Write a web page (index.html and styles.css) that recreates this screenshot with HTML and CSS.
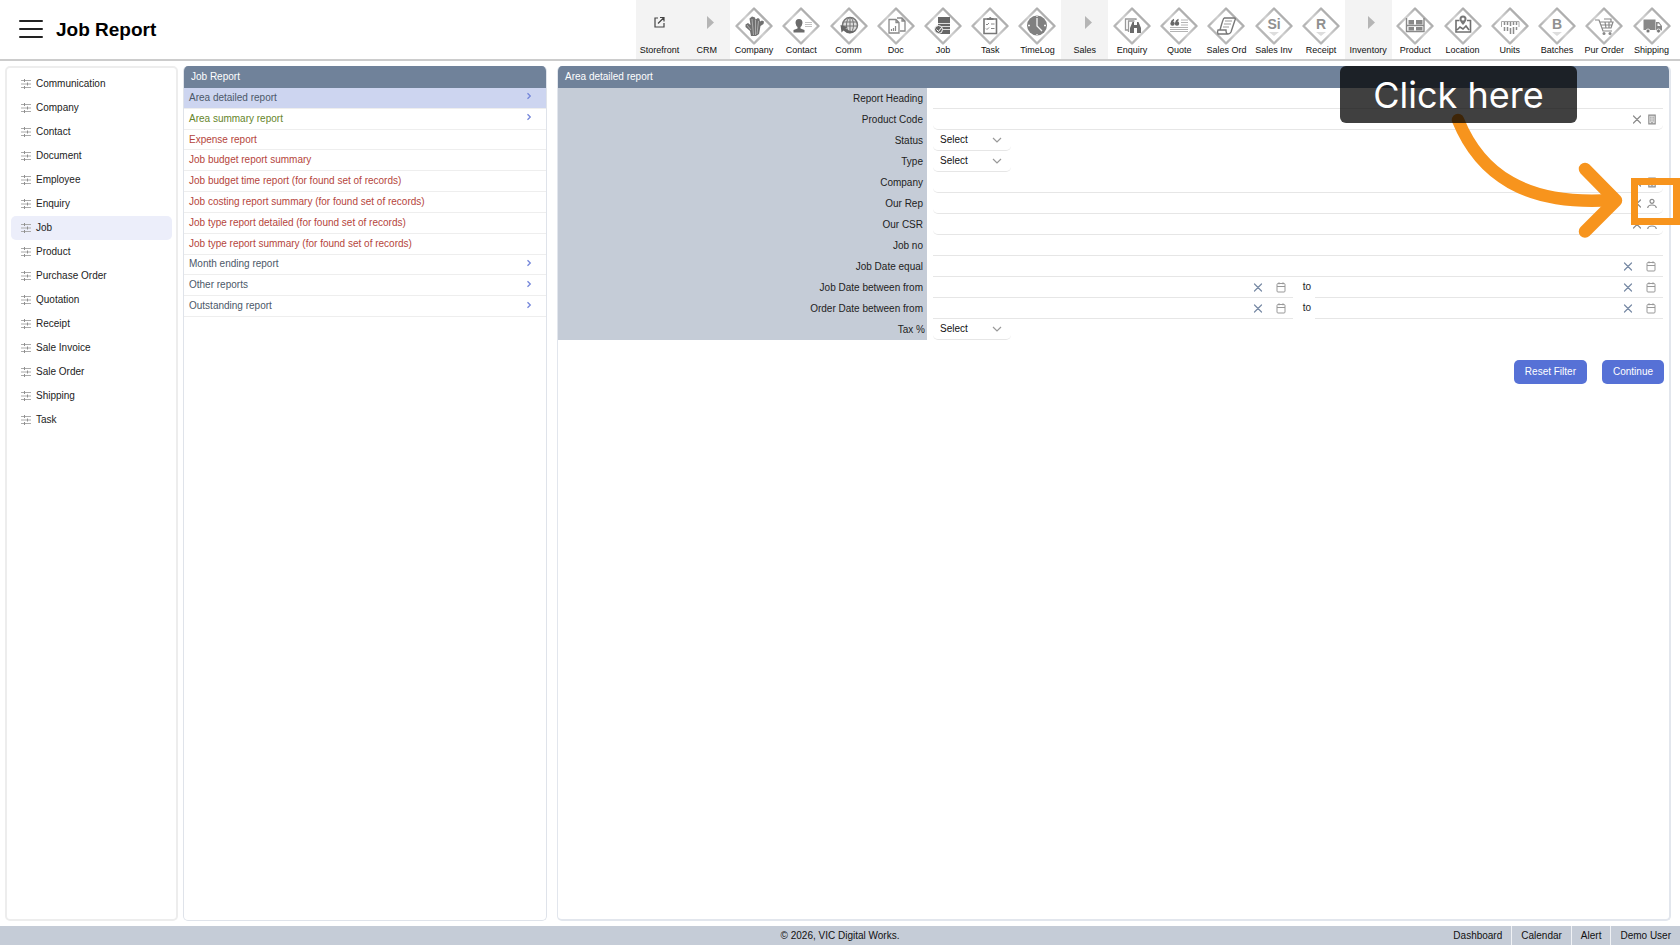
FILE: index.html
```
<!DOCTYPE html>
<html lang="en">
<head>
<meta charset="utf-8">
<title>Job Report</title>
<link rel="stylesheet" href="styles.css">
</head>
<body>
<svg class="defs" width="0" height="0" aria-hidden="true">
  <defs>
    <linearGradient id="edge" x1="0" y1="1" x2="1" y2="0"><stop offset="0" stop-color="#c4c4c4"/><stop offset=".3" stop-color="#b4b4b4"/><stop offset=".5" stop-color="#d0d0d0"/><stop offset="1" stop-color="#8e8e8e"/></linearGradient>
    <symbol id="diamond" viewBox="0 0 38 38"><path d="M19 1.500 36.500 19 19 36.500 1.500 19Z" fill="#fff" stroke="url(#edge)" stroke-width="2.400" stroke-linejoin="round"/></symbol>
    <symbol id="sliders" viewBox="0 0 10 10"><path d="M0 1.500h10M0 5h10M0 8.500h10" stroke="#aaa" fill="none"/><path d="M3.500 0v3M6.500 3.500v3M3.500 7v3" stroke="#909090" fill="none"/></symbol>
    <symbol id="cross" viewBox="0 0 10 10"><path d="M1.500 1.500l7 7M8.500 1.500l-7 7" stroke="currentColor" stroke-width="1.200" fill="none" stroke-linecap="round"/></symbol>
    <symbol id="calendar" viewBox="0 0 10 11"><path d="M1 2.500q0-1 1-1h6q1 0 1 1v6.500q0 1-1 1H2q-1 0-1-1zM1 4.500h8M3 .3v2M7 .3v2" stroke="#999" fill="none"/></symbol>
    <symbol id="building" viewBox="0 0 10 12"><path d="M1.500 1.200h7v9.600h-7z" stroke="currentColor" stroke-width="1.200" fill="#e4e4e4"/><path d="M3 3.500h1.500M5.500 3.500H7M3 5.500h1.500M5.500 5.500H7M3 7.500h1.500M5.500 7.500H7M4 9.500h2" stroke="currentColor"/></symbol>
    <symbol id="person" viewBox="0 0 10 10"><circle cx="5" cy="2.800" r="2" stroke="currentColor" stroke-width="1.200" fill="none"/><path d="M.7 9.500C1 5.500 9 5.500 9.300 9.500" stroke="currentColor" stroke-width="1.200" fill="none"/></symbol>
    <symbol id="next" viewBox="0 0 6 8"><path d="M1.500 1.200 4.300 4 1.500 6.800" stroke="#7486da" stroke-width="1.300" fill="none"/></symbol>
    <symbol id="fold" viewBox="0 0 38 38"><path d="M19 9v13l7-6.500z" fill="#b5b5b5"/></symbol>
  </defs>
</svg>

<header class="topbar">
  <button class="menu" type="button" aria-label="Menu"><span></span><span></span><span></span></button>
  <h1>Job Report</h1>
  <nav class="tools">
    <a class="tool group" href="#"><svg viewBox="0 0 38 38"><path d="M17 11h-3v9h9v-4M19 10.500h4v4M23 10.500l-6 6" stroke="#444" stroke-width="1.200" fill="none"/></svg>Storefront</a>
    <a class="tool group" href="#"><svg><use href="#fold"/></svg>CRM</a>
    <a class="tool" href="#"><svg viewBox="0 0 38 38"><use href="#diamond"/><path d="M16 29 15 24 10.500 20v-2.500L13 16l2.500 2L14.500 11.500l2.500-2 3 1 .5 2 2.500-1.500 1.500 1 .5 2.500 2-1 2 1-.5 2.500-3 2L24 27l-3 2z" fill="#707070"/><path d="M17 12l1.500 16M20.500 13v15M23.500 14l-1.500 13M12 18l4 5" stroke="#c4c4c4" stroke-width=".7"/></svg>Company</a>
    <a class="tool" href="#"><svg viewBox="0 0 38 38"><use href="#diamond"/><path d="M17 12q3.500 0 3.500 4-.5 3-2 4v1.500l4 1.500v2.500h-11V23l4-1.500V20q-1.500-1-2-4 0-4 3.500-4z" fill="#6b6b6b"/><path d="M23 15.500h7M23 17.500h7M23 19.500h7" stroke="#bbb" stroke-width=".9"/></svg>Contact</a>
    <a class="tool" href="#"><svg viewBox="0 0 38 38"><use href="#diamond"/><circle cx="20" cy="18" r="7.500" stroke="#777" stroke-width="1.500" fill="#ddd"/><ellipse cx="20" cy="18" rx="3.500" ry="7.500" stroke="#777" fill="none"/><path d="M13 15h14M12 19h16M20 10v15" stroke="#777"/><path d="M10.500 18l7 2-2 1.500q5 4 11 2-7 6-13 0l-2 2z" fill="#666"/></svg>Comm</a>
    <a class="tool" href="#"><svg viewBox="0 0 38 38"><use href="#diamond"/><path d="M12 12.500h7l3 3v10.500H12zM20 11h5l3 3v10h-5M19 12.500v3h3M25 11v3h3" stroke="#888" stroke-width="1.300" fill="none"/><path d="M14.500 24v-2M16.500 24v-3M18.500 24v-5" stroke="#888" stroke-width="1.200"/></svg>Doc</a>
    <a class="tool" href="#"><svg viewBox="0 0 38 38"><use href="#diamond"/><path d="M14 10h12v17H14z" fill="#666"/><path d="M14 16.500h12M18 19.500h8M19 22.500h7" stroke="#ddd"/><circle cx="14.500" cy="22.500" r="4" fill="#666" stroke="#fff"/><path d="M12.500 22.500l2 2 3-4" stroke="#fff" fill="none"/></svg>Job</a>
    <a class="tool" href="#"><svg viewBox="0 0 38 38"><use href="#diamond"/><path d="M13 12h12.500v14.500H13z" stroke="#777" stroke-width="1.600" fill="#fff"/><path d="M16 13v-2h2q1-2 2.500 0h2v2z" fill="#777"/><path d="M15 17l1 1 2-2M20 17h3.500M15 21.500l1 1 2-2M20 21.500h3.500" stroke="#888" fill="none"/></svg>Task</a>
    <a class="tool" href="#"><svg viewBox="0 0 38 38"><use href="#diamond"/><circle cx="19" cy="18.500" r="10" fill="#808080"/><path d="M19 11v8l5 5M10 18.500h2M26 18.500h2M19 9v1M19 27v1" stroke="#f5f5f5" stroke-width="1.300" fill="none"/></svg>TimeLog</a>
    <a class="tool group" href="#"><svg><use href="#fold"/></svg>Sales</a>
    <a class="tool" href="#"><svg viewBox="0 0 38 38"><use href="#diamond"/><path d="M15 23h-2.500V12H23v1M15.500 25V14h6" stroke="#999" stroke-width="1.300" fill="none"/><path d="M17 26v-5l2.500-6H21v3h3v-3h1.500l2.500 6v5h-4v-5h-3v5z" fill="#6b6b6b"/></svg>Enquiry</a>
    <a class="tool" href="#"><svg viewBox="0 0 38 38"><use href="#diamond"/><path d="M14 12.500q-2.500 1-3 4a1.500 1.500 0 1 0 1.500-1.500M18.500 12.500q-2.500 1-3 4a1.500 1.500 0 1 0 1.500-1.500" stroke="#666" stroke-width="1.400" fill="#666"/><path d="M21 13h7M21 15.500h7M21 18h7M10 20.500h18M10 22.500h18M10 24.500h18" stroke="#b4b4b4"/></svg>Quote</a>
    <a class="tool" href="#"><svg viewBox="0 0 38 38"><use href="#diamond"/><path d="M17 11h10q2 0 1 2l-4 12q-1 2-3 2H11q-1-2 0-4h8q0 4 2 4M17 11q-1 1-4 12" stroke="#777" stroke-width="1.400" fill="none"/><path d="M18 14h7M17 17h7M16 20h6" stroke="#999" stroke-width="1.200"/></svg>Sales Ord</a>
    <a class="tool" href="#"><svg viewBox="0 0 38 38"><use href="#diamond"/><text x="19" y="22" class="glyph">Si</text><path d="M14 25h10l-5 4z" fill="#ddd"/></svg>Sales Inv</a>
    <a class="tool" href="#"><svg viewBox="0 0 38 38"><use href="#diamond"/><text x="19" y="22" class="glyph">R</text><path d="M14 25h10l-5 4z" fill="#ddd"/></svg>Receipt</a>
    <a class="tool group" href="#"><svg><use href="#fold"/></svg>Inventory</a>
    <a class="tool" href="#"><svg viewBox="0 0 38 38"><use href="#diamond"/><path d="M10.500 11v14M28 11v14M10 18.500h18M10 24.500h18" stroke="#888" stroke-width="1.400"/><path d="M12.500 13h5.500v4.500h-5.500zM20 13h6.500v4.500H20zM12.500 20h5.500v3.500h-5.500zM20 20h6.500v3.500H20z" fill="#888"/></svg>Product</a>
    <a class="tool" href="#"><svg viewBox="0 0 38 38"><use href="#diamond"/><path d="M15.500 13.500H12V25h14.500V13.500H23M13 23l3-3 3 2 3-3 3 4" stroke="#707070" stroke-width="1.600" fill="none"/><path d="M19 18q-3.500-4-3.500-6a3.500 3.500 0 0 1 7 0q0 2-3.500 6z" fill="#777"/><circle cx="19" cy="12" r="1.500" fill="#fff"/></svg>Location</a>
    <a class="tool" href="#"><svg viewBox="0 0 38 38"><use href="#diamond"/><path d="M10.500 20v-5.500H28V20" stroke="#aaa" fill="none"/><path d="M13.500 15v3M16.500 15v3M19.500 15v4M22.500 15v3M25.500 15v3M13.500 20v4M16.500 20v4M19.500 21v6M22.500 20v7M25.500 20v3" stroke="#8c8c8c" stroke-width="1.500"/></svg>Units</a>
    <a class="tool" href="#"><svg viewBox="0 0 38 38"><use href="#diamond"/><text x="19" y="22" class="glyph">B</text><path d="M14 25h10l-5 4z" fill="#ddd"/></svg>Batches</a>
    <a class="tool" href="#"><svg viewBox="0 0 38 38"><use href="#diamond"/><path d="M10 13h4l4 11h9M15 15h13l-2 6h-9M16 18h11M20 15l1 6M24 15v6M19 12h7v3" stroke="#888" stroke-width="1.200" fill="none"/><circle cx="19" cy="26.500" r="1.500" fill="#888"/><circle cx="25" cy="26.500" r="1.500" fill="#888"/></svg>Pur Order</a>
    <a class="tool" href="#"><svg viewBox="0 0 38 38"><use href="#diamond"/><path d="M10.500 12.500h12V23h-12zM23 15h3l3 4v4.500h-6z" fill="#888"/><path d="M24.500 16.500H26l1.500 2.500h-3z" fill="#fff"/><circle cx="15" cy="24" r="2" fill="#777" stroke="#fff" stroke-width=".8"/><circle cx="25.500" cy="24" r="2" fill="#777" stroke="#fff" stroke-width=".8"/></svg>Shipping</a>
  </nav>
</header>

<main class="workspace">
  <nav class="panel modules">
    <a href="#"><svg><use href="#sliders"/></svg>Communication</a>
    <a href="#"><svg><use href="#sliders"/></svg>Company</a>
    <a href="#"><svg><use href="#sliders"/></svg>Contact</a>
    <a href="#"><svg><use href="#sliders"/></svg>Document</a>
    <a href="#"><svg><use href="#sliders"/></svg>Employee</a>
    <a href="#"><svg><use href="#sliders"/></svg>Enquiry</a>
    <a href="#" class="active"><svg><use href="#sliders"/></svg>Job</a>
    <a href="#"><svg><use href="#sliders"/></svg>Product</a>
    <a href="#"><svg><use href="#sliders"/></svg>Purchase Order</a>
    <a href="#"><svg><use href="#sliders"/></svg>Quotation</a>
    <a href="#"><svg><use href="#sliders"/></svg>Receipt</a>
    <a href="#"><svg><use href="#sliders"/></svg>Sale Invoice</a>
    <a href="#"><svg><use href="#sliders"/></svg>Sale Order</a>
    <a href="#"><svg><use href="#sliders"/></svg>Shipping</a>
    <a href="#"><svg><use href="#sliders"/></svg>Task</a>
  </nav>

  <section class="panel reports">
    <h2>Job Report</h2>
    <nav class="report-list">
      <a href="#" class="active">Area detailed report<svg><use href="#next"/></svg></a>
      <a href="#" class="green">Area summary report<svg><use href="#next"/></svg></a>
      <a href="#" class="red">Expense report</a>
      <a href="#" class="red">Job budget report summary</a>
      <a href="#" class="red">Job budget time report (for found set of records)</a>
      <a href="#" class="red">Job costing report summary (for found set of records)</a>
      <a href="#" class="red">Job type report detailed (for found set of records)</a>
      <a href="#" class="red">Job type report summary (for found set of records)</a>
      <a href="#">Month ending report<svg><use href="#next"/></svg></a>
      <a href="#">Other reports<svg><use href="#next"/></svg></a>
      <a href="#">Outstanding report<svg><use href="#next"/></svg></a>
    </nav>
  </section>

  <section class="panel detail">
    <h2>Area detailed report</h2>
    <form>
      <div class="row"><label for="heading">Report Heading</label><div class="cell"><span class="field"><input id="heading" type="text"></span></div></div>
      <div class="row"><label for="code">Product Code</label><div class="cell"><span class="field lookup"><input id="code" type="text"><button type="button" aria-label="Clear product code"><svg><use href="#cross"/></svg></button><button type="button" aria-label="Find product"><svg><use href="#building"/></svg></button></span></div></div>
      <div class="row"><label for="status">Status</label><div class="cell"><span class="pick"><select id="status"><option>Select</option></select><svg viewBox="0 0 10 6"><path d="M1 1l4 4 4-4" stroke="#999" stroke-width="1.200" fill="none"/></svg></span></div></div>
      <div class="row"><label for="type">Type</label><div class="cell"><span class="pick"><select id="type"><option>Select</option></select><svg viewBox="0 0 10 6"><path d="M1 1l4 4 4-4" stroke="#999" stroke-width="1.200" fill="none"/></svg></span></div></div>
      <div class="row"><label for="company">Company</label><div class="cell"><span class="field lookup"><input id="company" type="text"><button type="button" aria-label="Clear company"><svg><use href="#cross"/></svg></button><button type="button" aria-label="Find company"><svg><use href="#building"/></svg></button></span></div></div>
      <div class="row"><label for="rep">Our Rep</label><div class="cell"><span class="field lookup"><input id="rep" type="text"><button type="button" aria-label="Clear rep"><svg><use href="#cross"/></svg></button><button type="button" aria-label="Find rep"><svg><use href="#person"/></svg></button></span></div></div>
      <div class="row"><label for="csr">Our CSR</label><div class="cell"><span class="field lookup"><input id="csr" type="text"><button type="button" aria-label="Clear CSR"><svg><use href="#cross"/></svg></button><button type="button" aria-label="Find CSR"><svg><use href="#person"/></svg></button></span></div></div>
      <div class="row"><label for="jobno">Job no</label><div class="cell"><span class="field"><input id="jobno" type="text"></span></div></div>
      <div class="row"><label for="jobdate">Job Date equal</label><div class="cell"><span class="field date"><input id="jobdate" type="text"><button type="button" aria-label="Clear date"><svg><use href="#cross"/></svg></button><button type="button" aria-label="Pick date"><svg><use href="#calendar"/></svg></button></span></div></div>
      <div class="row"><label for="jobfrom">Job Date between from</label><div class="cell"><span class="field date"><input id="jobfrom" type="text"><button type="button" aria-label="Clear date"><svg><use href="#cross"/></svg></button><button type="button" aria-label="Pick date"><svg><use href="#calendar"/></svg></button></span><label class="to" for="jobto">to</label><span class="field date"><input id="jobto" type="text"><button type="button" aria-label="Clear date"><svg><use href="#cross"/></svg></button><button type="button" aria-label="Pick date"><svg><use href="#calendar"/></svg></button></span></div></div>
      <div class="row"><label for="orderfrom">Order Date between from</label><div class="cell"><span class="field date"><input id="orderfrom" type="text"><button type="button" aria-label="Clear date"><svg><use href="#cross"/></svg></button><button type="button" aria-label="Pick date"><svg><use href="#calendar"/></svg></button></span><label class="to" for="orderto">to</label><span class="field date"><input id="orderto" type="text"><button type="button" aria-label="Clear date"><svg><use href="#cross"/></svg></button><button type="button" aria-label="Pick date"><svg><use href="#calendar"/></svg></button></span></div></div>
      <div class="row"><label for="tax">Tax %</label><div class="cell"><span class="pick"><select id="tax"><option>Select</option></select><svg viewBox="0 0 10 6"><path d="M1 1l4 4 4-4" stroke="#999" stroke-width="1.200" fill="none"/></svg></span></div></div>
      <div class="actions"><button type="reset">Reset Filter</button><button type="submit">Continue</button></div>
    </form>
  </section>
</main>

<footer class="footer">
  <p>© 2026, VIC Digital Works.</p>
  <nav><a href="#">Dashboard</a><a href="#">Calendar</a><a href="#">Alert</a><a href="#">Demo User</a></nav>
</footer>

<div class="hint">
  <svg viewBox="0 0 340 180"><g fill="none" stroke="#f7941d" stroke-width="12.500" stroke-linecap="round" stroke-linejoin="round"><path d="M118 54C140 108 185 140 272 134"/><path d="M245 103l31 31.500-31 31"/></g></svg>
  <span class="hint-target"></span>
  <span class="hint-label">Click here</span>
</div>
</body>
</html>
```
FILE: styles.css
```
* { box-sizing: border-box; }
body {
  margin: 0;
  min-height: 100vh;
  display: flex;
  flex-direction: column;
  position: relative;
  overflow-x: hidden;
  background: #fff;
  color: #222;
  font: 10px/12px "Liberation Sans", Arial, sans-serif;
}
a { color: inherit; text-decoration: none; }
h1, h2, p { margin: 0; }
button, input, select { font: inherit; color: inherit; border: 0; background: none; padding: 0; margin: 0; }
.defs { position: absolute; }

.topbar {
  display: flex;
  align-items: stretch;
  border-bottom: 2px solid #ccc;
  height: 61px;
}
.menu { display: flex; flex-direction: column; gap: 6px; width: 24px; margin: 20px 13px 0 19px; }
.menu span { height: 2px; width: 100%; border-radius: 1px; background: #222; }
.topbar h1 { font-size: 19px; line-height: 59px; color: #000; }
.tools { display: flex; flex: 0 1 1044px; margin-left: auto; padding-right: 5px; }
.tool {
  flex: 1 1 0;
  display: flex;
  flex-direction: column;
  align-items: center;
  padding-top: 7px;
  font-size: 9px;
  line-height: 11px;
  white-space: nowrap;
  color: #111;
}
.tool svg { width: 38px; height: 38px; }
.tool.group { background: #f3f3f3; }
.glyph { font-weight: bold; font-size: 14px; text-anchor: middle; fill: #909090; }

.workspace { flex: 1; display: flex; padding: 5px 9px 5px 5px; }
.panel { border: 1px solid #dfe3ea; border-radius: 5px; overflow: hidden; }
.panel h2 {
  height: 22px;
  padding-left: 7px;
  background: #70829a;
  color: #fff;
  font-size: 10px;
  font-weight: normal;
  line-height: 22px;
}
.modules { flex: 0 0 173px; border: 2px solid #ededed; padding: 4px; }
.modules a { display: flex; align-items: center; gap: 5px; height: 24px; padding-left: 10px; border-radius: 5px; }
.modules a.active { background: #eceefa; }
.modules svg { width: 10px; height: 10px; }
.reports { flex: 0 0 364px; margin: 0 10px 0 5px; border-top: 0; }
.report-list { display: grid; grid-auto-rows: 1fr; height: 229px; color: #4c5868; }
.report-list a { display: flex; align-items: center; justify-content: space-between; padding: 0 14px 0 5px; border-bottom: 1px solid #eee; }
.report-list a.active { background: #cdd5f0; }
.report-list .green { color: #66852c; }
.report-list .red { color: #b5453c; }
.report-list svg { width: 6px; height: 8px; margin-bottom: 3px; }

.detail { flex: 1; border-width: 0 2px 2px 1px; border-color: #e2e6ed; }
.row { display: flex; height: 21px; }
.row > label { flex: 0 0 369px; padding-right: 4px; background: #c5ccd7; text-align: right; line-height: 22px; }
.row:nth-child(12) > label { padding-right: 2px; }
.cell { flex: 1; display: flex; padding: 0 6px; }
.field { flex: 1; display: flex; align-items: center; border-bottom: 1px solid #e6e6e6; color: #8c8c8c; }
.field input { flex: 1; min-width: 0; height: 18px; outline: 0; }
.field button { display: flex; }
.field svg { width: 10px; height: 11px; }
.lookup { border-radius: 0 0 5px 5px; gap: 5px; padding-right: 6px; }
.date { gap: 13px; padding-right: 7px; }
.date button:first-of-type { color: #788aa5; }
.to { width: 22px; padding-right: 4px; text-align: right; line-height: 20px; }
.cell .date:first-child:not(:last-child) { flex-grow: 1.036; }
.pick { position: relative; width: 78px; border-bottom: 1px solid #e6e6e6; border-radius: 0 0 5px 5px; }
.pick select { width: 100%; height: 19px; padding-left: 7px; appearance: none; color: #111; }
.pick svg { position: absolute; right: 9px; top: 7px; width: 10px; height: 6px; pointer-events: none; }
.actions { display: flex; justify-content: flex-end; gap: 15px; padding: 20px 5px; }
.actions button { height: 24px; padding: 0 11px; border-radius: 5px; background: #5671d6; color: #fff; }

.footer { display: flex; align-items: center; height: 19px; background: #c5ccd7; color: #111; }
.footer::before { content: ""; flex: 1; }
.footer nav { flex: 1; display: flex; justify-content: flex-end; }
.footer a { padding: 0 9px; line-height: 19px; border-left: 1px solid #f0f2f5; }
.footer a:first-child { border-left: 0; }

.hint { position: absolute; top: 66px; right: 0; width: 340px; height: 180px; pointer-events: none; }
.hint svg { position: absolute; top: 0; left: 0; width: 340px; height: 180px; }
.hint-target { position: absolute; top: 112px; right: 0; width: 49px; height: 47px; border: 7px solid #f7941d; }
.hint-label {
  position: absolute;
  top: 0;
  left: 0;
  width: 237px;
  height: 57px;
  border-radius: 6px;
  background: rgba(0, 0, 0, 0.75);
  color: #fff;
  font: 36px/59px Inter, sans-serif;
  text-align: center;
}
```
